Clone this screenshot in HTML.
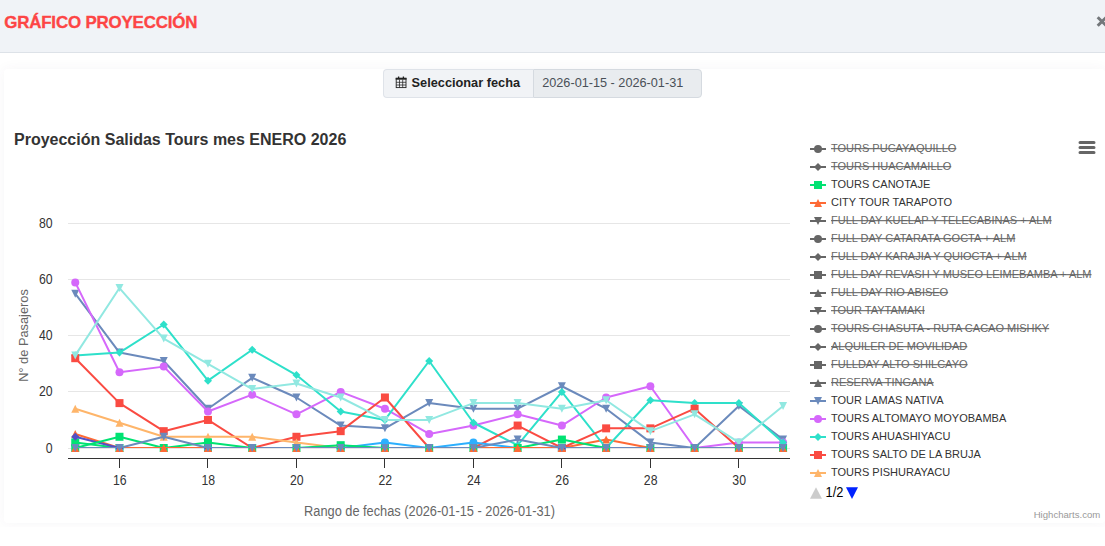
<!DOCTYPE html>
<html lang="es"><head><meta charset="utf-8"><title>Gráfico Proyección</title>
<style>
html,body{margin:0;padding:0}
body{width:1105px;height:546px;overflow:hidden;background:#fff;position:relative;font-family:"Liberation Sans",Arial,sans-serif}
.hdr{position:absolute;left:0;top:0;width:1105px;height:52px;background:#f0f3f7;border-bottom:1px solid #dde2e8}
.hdr h5{position:absolute;left:4.2px;top:12px;margin:0;font-size:16.9px;line-height:22px;font-weight:bold;color:#fd4545;white-space:nowrap;letter-spacing:-0.17px;-webkit-text-stroke:0.35px #fd4545}
.close{position:absolute;left:1096px;top:8px;font-size:22px;line-height:26px;font-weight:bold;color:transparent}
.cx{position:absolute;left:1096px;top:15px}
.wrap{position:absolute;left:0;top:53px;width:1105px;height:474px;overflow:hidden}
.card{position:absolute;left:4px;top:16px;width:1100.5px;height:454px;background:#fff;border-radius:4px;box-shadow:0 0 13px 0 rgba(82,63,105,.05)}
.grp{position:absolute;left:383px;top:69px;width:319px;height:29px;box-sizing:border-box;display:flex}
.grp .lab{width:150px;box-sizing:border-box;border:1px solid #dfe3e9;border-right:0;border-radius:4px 0 0 4px;background:#f1f3f6;font-weight:bold;font-size:12.75px;color:#222;line-height:25.500px;padding-left:27.600px;position:relative;white-space:nowrap}
.grp .inp{flex:1;box-sizing:border-box;border:1px solid #d5dae0;border-radius:0 4px 4px 0;background:#e9ecef;font-size:12.7px;color:#495057;line-height:27.500px;padding-left:8.200px;white-space:nowrap}
.grp svg{position:absolute;left:11px;top:6px}
svg.chart{position:absolute;left:0;top:0}
</style></head><body>
<div class="hdr"><h5>GRÁFICO PROYECCIÓN</h5><span class="close">×</span><svg class="cx" width="12" height="14" viewBox="0 0 12 14"><path d="M1.700 2.200L10.300 10.800M1.700 10.800L10.300 2.200" stroke="#74777b" stroke-width="3" fill="none"/></svg></div>
<div class="wrap"><div class="card"></div></div>
<div class="grp"><div class="lab"><svg width="12" height="13" viewBox="0 0 12 13"><path d="M3.600 0.4v2.200M8.400 0.4v2.200" stroke="#222" stroke-width="1.300" fill="none"/><rect x="0.7" y="1.700" width="10.800" height="2" fill="#222"/><rect x="1.200" y="2.500" width="9.800" height="9.100" stroke="#222" stroke-width="0.9" fill="none"/><path d="M4.500 3.500v8M7.700 3.500v8M1.200 6.300h9.800M1.200 9h9.800" stroke="#222" stroke-width="0.75" fill="none"/></svg>Seleccionar fecha</div><div class="inp">2026-01-15 - 2026-01-31</div></div>
<svg class="chart" width="1105" height="546" viewBox="0 0 1105 546" font-family="'Liberation Sans', Arial, Helvetica, sans-serif">
<defs><clipPath id="pc"><rect x="68" y="223" width="722" height="225"/></clipPath></defs>
<path d="M68 448.5H790" stroke="#e6e6e6" stroke-width="1" fill="none"/>
<path d="M68 391.5H790" stroke="#e6e6e6" stroke-width="1" fill="none"/>
<path d="M68 335.5H790" stroke="#e6e6e6" stroke-width="1" fill="none"/>
<path d="M68 279.5H790" stroke="#e6e6e6" stroke-width="1" fill="none"/>
<path d="M68 223.5H790" stroke="#e6e6e6" stroke-width="1" fill="none"/>
<path d="M68 458.5H790" stroke="#333" stroke-width="1" fill="none"/>
<path d="M119.5 458V468" stroke="#333" stroke-width="1" fill="none"/>
<text transform="translate(119.79 485) scale(0.96 1.12)" text-anchor="middle" font-size="12.8" fill="#333">16</text>
<path d="M207.5 458V468" stroke="#333" stroke-width="1" fill="none"/>
<text transform="translate(208.27 485) scale(0.96 1.12)" text-anchor="middle" font-size="12.8" fill="#333">18</text>
<path d="M296.5 458V468" stroke="#333" stroke-width="1" fill="none"/>
<text transform="translate(296.75 485) scale(0.96 1.12)" text-anchor="middle" font-size="12.8" fill="#333">20</text>
<path d="M384.5 458V468" stroke="#333" stroke-width="1" fill="none"/>
<text transform="translate(385.23 485) scale(0.96 1.12)" text-anchor="middle" font-size="12.8" fill="#333">22</text>
<path d="M473.5 458V468" stroke="#333" stroke-width="1" fill="none"/>
<text transform="translate(473.71 485) scale(0.96 1.12)" text-anchor="middle" font-size="12.8" fill="#333">24</text>
<path d="M561.5 458V468" stroke="#333" stroke-width="1" fill="none"/>
<text transform="translate(562.19 485) scale(0.96 1.12)" text-anchor="middle" font-size="12.8" fill="#333">26</text>
<path d="M650.5 458V468" stroke="#333" stroke-width="1" fill="none"/>
<text transform="translate(650.67 485) scale(0.96 1.12)" text-anchor="middle" font-size="12.8" fill="#333">28</text>
<path d="M738.5 458V468" stroke="#333" stroke-width="1" fill="none"/>
<text transform="translate(739.15 485) scale(0.96 1.12)" text-anchor="middle" font-size="12.8" fill="#333">30</text>
<text transform="translate(52.6 452.5) scale(0.96 1.12)" text-anchor="end" font-size="12.8" fill="#333">0</text>
<text transform="translate(52.6 396.38) scale(0.96 1.12)" text-anchor="end" font-size="12.8" fill="#333">20</text>
<text transform="translate(52.6 340.25) scale(0.96 1.12)" text-anchor="end" font-size="12.8" fill="#333">40</text>
<text transform="translate(52.6 284.12) scale(0.96 1.12)" text-anchor="end" font-size="12.8" fill="#333">60</text>
<text transform="translate(52.6 228) scale(0.96 1.12)" text-anchor="end" font-size="12.8" fill="#333">80</text>
<text transform="translate(28.3 335.5) rotate(-90) scale(1 1)" text-anchor="middle" font-size="12.8" fill="#666">N° de Pasajeros</text>
<text transform="translate(429.5 515.5) scale(1 1.1)" text-anchor="middle" font-size="12.8" fill="#666">Rango de fechas (2026-01-15 - 2026-01-31)</text>
<text transform="translate(14 144.5) scale(1 1)" font-size="16" fill="#333" font-weight="bold">Proyección Salidas Tours mes ENERO 2026</text>
<g>
<path d="M75.25 442.39L119.49 448L163.73 448L207.97 448L252.21 448L296.45 448L340.69 448L384.93 448L429.17 448L473.41 448L517.65 448L561.89 448L606.13 448L650.37 448L694.61 448L738.85 448L783.09 448" stroke="#00e272" stroke-width="2" fill="none" stroke-linejoin="round" stroke-linecap="round" clip-path="url(#pc)"/>
<rect x="71.25" y="438.39" width="8" height="8" fill="#00e272"/>
<rect x="115.49" y="444" width="8" height="8" fill="#00e272"/>
<rect x="203.97" y="444" width="8" height="8" fill="#00e272"/>
<rect x="336.69" y="444" width="8" height="8" fill="#00e272"/>
<rect x="557.89" y="444" width="8" height="8" fill="#00e272"/>
</g>
<g>
<path d="M75.25 433.97L119.49 448L163.73 448L207.97 448L252.21 448L296.45 448L340.69 448L384.93 448L429.17 448L473.41 448L517.65 448L561.89 448L606.13 439.58L650.37 448L694.61 448L738.85 448L783.09 448" stroke="#fe6a35" stroke-width="2" fill="none" stroke-linejoin="round" stroke-linecap="round" clip-path="url(#pc)"/>
<path d="M75.25 429.97L79.25 437.97L71.25 437.97Z" fill="#fe6a35"/>
<path d="M119.49 444L123.49 452L115.49 452Z" fill="#fe6a35"/>
<path d="M207.97 444L211.97 452L203.97 452Z" fill="#fe6a35"/>
<path d="M340.69 444L344.69 452L336.69 452Z" fill="#fe6a35"/>
<path d="M561.89 444L565.89 452L557.89 452Z" fill="#fe6a35"/>
<path d="M606.13 435.58L610.13 443.58L602.13 443.58Z" fill="#fe6a35"/>
</g>
<g>
<path d="M75.25 293.66L119.49 352.59L163.73 361.01L207.97 408.71L252.21 377.84L296.45 397.49L340.69 425.55L384.93 428.36L429.17 403.1L473.41 408.71L517.65 408.71L561.89 386.26L606.13 408.71L650.37 442.39L694.61 448L738.85 405.91L783.09 439.58" stroke="#6b8abc" stroke-width="2" fill="none" stroke-linejoin="round" stroke-linecap="round" clip-path="url(#pc)"/>
<path d="M71.25 289.66L79.25 289.66L75.25 297.66Z" fill="#6b8abc"/>
<path d="M115.49 348.59L123.49 348.59L119.49 356.59Z" fill="#6b8abc"/>
<path d="M159.73 357.01L167.73 357.01L163.73 365.01Z" fill="#6b8abc"/>
<path d="M203.97 404.71L211.97 404.71L207.97 412.71Z" fill="#6b8abc"/>
<path d="M248.21 373.84L256.21 373.84L252.21 381.84Z" fill="#6b8abc"/>
<path d="M292.45 393.49L300.45 393.49L296.45 401.49Z" fill="#6b8abc"/>
<path d="M336.69 421.55L344.69 421.55L340.69 429.55Z" fill="#6b8abc"/>
<path d="M380.93 424.36L388.93 424.36L384.93 432.36Z" fill="#6b8abc"/>
<path d="M425.17 399.1L433.17 399.1L429.17 407.1Z" fill="#6b8abc"/>
<path d="M469.41 404.71L477.41 404.71L473.41 412.71Z" fill="#6b8abc"/>
<path d="M513.65 404.71L521.65 404.71L517.65 412.71Z" fill="#6b8abc"/>
<path d="M557.89 382.26L565.89 382.26L561.89 390.26Z" fill="#6b8abc"/>
<path d="M602.13 404.71L610.13 404.71L606.13 412.71Z" fill="#6b8abc"/>
<path d="M646.37 438.39L654.37 438.39L650.37 446.39Z" fill="#6b8abc"/>
<path d="M734.85 401.91L742.85 401.91L738.85 409.91Z" fill="#6b8abc"/>
<path d="M779.09 435.58L787.09 435.58L783.09 443.58Z" fill="#6b8abc"/>
</g>
<g>
<path d="M75.25 282.43L119.49 372.23L163.73 366.62L207.97 411.52L252.21 394.68L296.45 414.32L340.69 391.88L384.93 408.71L429.17 433.97L473.41 425.55L517.65 414.32L561.89 425.55L606.13 397.49L650.37 386.26L694.61 448L738.85 442.39L783.09 442.39" stroke="#d568fb" stroke-width="2" fill="none" stroke-linejoin="round" stroke-linecap="round" clip-path="url(#pc)"/>
<circle cx="75.25" cy="282.43" r="4" fill="#d568fb"/>
<circle cx="119.49" cy="372.23" r="4" fill="#d568fb"/>
<circle cx="163.73" cy="366.62" r="4" fill="#d568fb"/>
<circle cx="207.97" cy="411.52" r="4" fill="#d568fb"/>
<circle cx="252.21" cy="394.68" r="4" fill="#d568fb"/>
<circle cx="296.45" cy="414.32" r="4" fill="#d568fb"/>
<circle cx="340.69" cy="391.88" r="4" fill="#d568fb"/>
<circle cx="384.93" cy="408.71" r="4" fill="#d568fb"/>
<circle cx="429.17" cy="433.97" r="4" fill="#d568fb"/>
<circle cx="473.41" cy="425.55" r="4" fill="#d568fb"/>
<circle cx="517.65" cy="414.32" r="4" fill="#d568fb"/>
<circle cx="561.89" cy="425.55" r="4" fill="#d568fb"/>
<circle cx="606.13" cy="397.49" r="4" fill="#d568fb"/>
<circle cx="650.37" cy="386.26" r="4" fill="#d568fb"/>
<circle cx="738.85" cy="442.39" r="4" fill="#d568fb"/>
<circle cx="783.09" cy="442.39" r="4" fill="#d568fb"/>
</g>
<g>
<path d="M75.25 355.39L119.49 352.59L163.73 324.52L207.97 380.65L252.21 349.78L296.45 375.04L340.69 411.52L384.93 419.94L429.17 361.01L473.41 422.74L517.65 445.19L561.89 391.88L606.13 448L650.37 400.29L694.61 403.1L738.85 403.1L783.09 442.39" stroke="#2ee0ca" stroke-width="2" fill="none" stroke-linejoin="round" stroke-linecap="round" clip-path="url(#pc)"/>
<path d="M75.25 351.39L79.25 355.39L75.25 359.39L71.25 355.39Z" fill="#2ee0ca"/>
<path d="M119.49 348.59L123.49 352.59L119.49 356.59L115.49 352.59Z" fill="#2ee0ca"/>
<path d="M163.73 320.52L167.73 324.52L163.73 328.52L159.73 324.52Z" fill="#2ee0ca"/>
<path d="M207.97 376.65L211.97 380.65L207.97 384.65L203.97 380.65Z" fill="#2ee0ca"/>
<path d="M252.21 345.78L256.21 349.78L252.21 353.78L248.21 349.78Z" fill="#2ee0ca"/>
<path d="M296.45 371.04L300.45 375.04L296.45 379.04L292.45 375.04Z" fill="#2ee0ca"/>
<path d="M340.69 407.52L344.69 411.52L340.69 415.52L336.69 411.52Z" fill="#2ee0ca"/>
<path d="M384.93 415.94L388.93 419.94L384.93 423.94L380.93 419.94Z" fill="#2ee0ca"/>
<path d="M429.17 357.01L433.17 361.01L429.17 365.01L425.17 361.01Z" fill="#2ee0ca"/>
<path d="M473.41 418.74L477.41 422.74L473.41 426.74L469.41 422.74Z" fill="#2ee0ca"/>
<path d="M517.65 441.19L521.65 445.19L517.65 449.19L513.65 445.19Z" fill="#2ee0ca"/>
<path d="M561.89 387.88L565.89 391.88L561.89 395.88L557.89 391.88Z" fill="#2ee0ca"/>
<path d="M650.37 396.29L654.37 400.29L650.37 404.29L646.37 400.29Z" fill="#2ee0ca"/>
<path d="M694.61 399.1L698.61 403.1L694.61 407.1L690.61 403.1Z" fill="#2ee0ca"/>
<path d="M738.85 399.1L742.85 403.1L738.85 407.1L734.85 403.1Z" fill="#2ee0ca"/>
<path d="M783.09 438.39L787.09 442.39L783.09 446.39L779.09 442.39Z" fill="#2ee0ca"/>
</g>
<g>
<path d="M75.25 358.2L119.49 403.1L163.73 431.16L207.97 419.94L252.21 448L296.45 436.77L340.69 431.16L384.93 397.49L429.17 448L473.41 448L517.65 425.55L561.89 448L606.13 428.36L650.37 428.36L694.61 408.71L738.85 448L783.09 448" stroke="#fa4b42" stroke-width="2" fill="none" stroke-linejoin="round" stroke-linecap="round" clip-path="url(#pc)"/>
<rect x="71.25" y="354.2" width="8" height="8" fill="#fa4b42"/>
<rect x="115.49" y="399.1" width="8" height="8" fill="#fa4b42"/>
<rect x="159.73" y="427.16" width="8" height="8" fill="#fa4b42"/>
<rect x="203.97" y="415.94" width="8" height="8" fill="#fa4b42"/>
<rect x="292.45" y="432.77" width="8" height="8" fill="#fa4b42"/>
<rect x="336.69" y="427.16" width="8" height="8" fill="#fa4b42"/>
<rect x="380.93" y="393.49" width="8" height="8" fill="#fa4b42"/>
<rect x="513.65" y="421.55" width="8" height="8" fill="#fa4b42"/>
<rect x="557.89" y="444" width="8" height="8" fill="#fa4b42"/>
<rect x="602.13" y="424.36" width="8" height="8" fill="#fa4b42"/>
<rect x="646.37" y="424.36" width="8" height="8" fill="#fa4b42"/>
<rect x="690.61" y="404.71" width="8" height="8" fill="#fa4b42"/>
</g>
<g>
<path d="M75.25 408.71L119.49 422.74L163.73 436.77L207.97 436.77L252.21 436.77L296.45 442.39L340.69 448L384.93 448L429.17 448L473.41 448L517.65 448L561.89 448L606.13 448L650.37 448L694.61 448L738.85 448L783.09 448" stroke="#feb56a" stroke-width="2" fill="none" stroke-linejoin="round" stroke-linecap="round" clip-path="url(#pc)"/>
<path d="M75.25 404.71L79.25 412.71L71.25 412.71Z" fill="#feb56a"/>
<path d="M119.49 418.74L123.49 426.74L115.49 426.74Z" fill="#feb56a"/>
<path d="M163.73 432.77L167.73 440.77L159.73 440.77Z" fill="#feb56a"/>
<path d="M207.97 432.77L211.97 440.77L203.97 440.77Z" fill="#feb56a"/>
<path d="M252.21 432.77L256.21 440.77L248.21 440.77Z" fill="#feb56a"/>
<path d="M296.45 438.39L300.45 446.39L292.45 446.39Z" fill="#feb56a"/>
<path d="M340.69 444L344.69 452L336.69 452Z" fill="#feb56a"/>
<path d="M561.89 444L565.89 452L557.89 452Z" fill="#feb56a"/>
</g>
<g>
<path d="M75.25 355.39L119.49 288.04L163.73 338.56L207.97 363.81L252.21 389.07L296.45 383.46L340.69 397.49L384.93 419.94L429.17 419.94L473.41 403.1L517.65 403.1L561.89 408.71L606.13 400.29L650.37 431.16L694.61 414.32L738.85 442.39L783.09 405.91" stroke="#91e8e1" stroke-width="2" fill="none" stroke-linejoin="round" stroke-linecap="round" clip-path="url(#pc)"/>
<path d="M71.25 351.39L79.25 351.39L75.25 359.39Z" fill="#91e8e1"/>
<path d="M115.49 284.04L123.49 284.04L119.49 292.04Z" fill="#91e8e1"/>
<path d="M159.73 334.56L167.73 334.56L163.73 342.56Z" fill="#91e8e1"/>
<path d="M203.97 359.81L211.97 359.81L207.97 367.81Z" fill="#91e8e1"/>
<path d="M248.21 385.07L256.21 385.07L252.21 393.07Z" fill="#91e8e1"/>
<path d="M292.45 379.46L300.45 379.46L296.45 387.46Z" fill="#91e8e1"/>
<path d="M336.69 393.49L344.69 393.49L340.69 401.49Z" fill="#91e8e1"/>
<path d="M380.93 415.94L388.93 415.94L384.93 423.94Z" fill="#91e8e1"/>
<path d="M425.17 415.94L433.17 415.94L429.17 423.94Z" fill="#91e8e1"/>
<path d="M469.41 399.1L477.41 399.1L473.41 407.1Z" fill="#91e8e1"/>
<path d="M513.65 399.1L521.65 399.1L517.65 407.1Z" fill="#91e8e1"/>
<path d="M557.89 404.71L565.89 404.71L561.89 412.71Z" fill="#91e8e1"/>
<path d="M602.13 396.29L610.13 396.29L606.13 404.29Z" fill="#91e8e1"/>
<path d="M646.37 427.16L654.37 427.16L650.37 435.16Z" fill="#91e8e1"/>
<path d="M690.61 410.32L698.61 410.32L694.61 418.32Z" fill="#91e8e1"/>
<path d="M734.85 438.39L742.85 438.39L738.85 446.39Z" fill="#91e8e1"/>
<path d="M779.09 401.91L787.09 401.91L783.09 409.91Z" fill="#91e8e1"/>
</g>
<g>
<path d="M75.25 448L119.49 448L163.73 448L207.97 448L252.21 448L296.45 448L340.69 448L384.93 442.39L429.17 448L473.41 442.39L517.65 448L561.89 448L606.13 448L650.37 448L694.61 448L738.85 448L783.09 448" stroke="#2caffe" stroke-width="2" fill="none" stroke-linejoin="round" stroke-linecap="round" clip-path="url(#pc)"/>
<circle cx="119.49" cy="448" r="4" fill="#2caffe"/>
<circle cx="207.97" cy="448" r="4" fill="#2caffe"/>
<circle cx="340.69" cy="448" r="4" fill="#2caffe"/>
<circle cx="384.93" cy="442.39" r="4" fill="#2caffe"/>
<circle cx="473.41" cy="442.39" r="4" fill="#2caffe"/>
<circle cx="561.89" cy="448" r="4" fill="#2caffe"/>
</g>
<g>
<path d="M75.25 436.77L119.49 448L163.73 448L207.97 448L252.21 448L296.45 448L340.69 448L384.93 448L429.17 448L473.41 448L517.65 448L561.89 448L606.13 448L650.37 448L694.61 448L738.85 448L783.09 448" stroke="#544fc5" stroke-width="2" fill="none" stroke-linejoin="round" stroke-linecap="round" clip-path="url(#pc)"/>
<path d="M75.25 432.77L79.25 436.77L75.25 440.77L71.25 436.77Z" fill="#544fc5"/>
<path d="M119.49 444L123.49 448L119.49 452L115.49 448Z" fill="#544fc5"/>
<path d="M207.97 444L211.97 448L207.97 452L203.97 448Z" fill="#544fc5"/>
<path d="M340.69 444L344.69 448L340.69 452L336.69 448Z" fill="#544fc5"/>
<path d="M561.89 444L565.89 448L561.89 452L557.89 448Z" fill="#544fc5"/>
</g>
<g>
<path d="M75.25 448L119.49 436.77L163.73 448L207.97 442.39L252.21 448L296.45 448L340.69 445.19L384.93 448L429.17 448L473.41 448L517.65 448L561.89 439.58L606.13 448L650.37 448L694.61 448L738.85 448L783.09 448" stroke="#00e272" stroke-width="2" fill="none" stroke-linejoin="round" stroke-linecap="round" clip-path="url(#pc)"/>
<rect x="71.25" y="444" width="8" height="8" fill="#00e272"/>
<rect x="115.49" y="432.77" width="8" height="8" fill="#00e272"/>
<rect x="159.73" y="444" width="8" height="8" fill="#00e272"/>
<rect x="203.97" y="438.39" width="8" height="8" fill="#00e272"/>
<rect x="248.21" y="444" width="8" height="8" fill="#00e272"/>
<rect x="292.45" y="444" width="8" height="8" fill="#00e272"/>
<rect x="336.69" y="441.19" width="8" height="8" fill="#00e272"/>
<rect x="380.93" y="444" width="8" height="8" fill="#00e272"/>
<rect x="425.17" y="444" width="8" height="8" fill="#00e272"/>
<rect x="469.41" y="444" width="8" height="8" fill="#00e272"/>
<rect x="513.65" y="444" width="8" height="8" fill="#00e272"/>
<rect x="557.89" y="435.58" width="8" height="8" fill="#00e272"/>
<rect x="602.13" y="444" width="8" height="8" fill="#00e272"/>
<rect x="646.37" y="444" width="8" height="8" fill="#00e272"/>
<rect x="690.61" y="444" width="8" height="8" fill="#00e272"/>
<rect x="734.85" y="444" width="8" height="8" fill="#00e272"/>
<rect x="779.09" y="444" width="8" height="8" fill="#00e272"/>
</g>
<g>
<path d="M75.25 448L119.49 448L163.73 448L207.97 448L252.21 448L296.45 448L340.69 448L384.93 448L429.17 448L473.41 448L517.65 448L561.89 448L606.13 448L650.37 448L694.61 448L738.85 448L783.09 448" stroke="#fe6a35" stroke-width="2" fill="none" stroke-linejoin="round" stroke-linecap="round" clip-path="url(#pc)"/>
<path d="M75.25 444L79.25 452L71.25 452Z" fill="#fe6a35"/>
<path d="M119.49 444L123.49 452L115.49 452Z" fill="#fe6a35"/>
<path d="M163.73 444L167.73 452L159.73 452Z" fill="#fe6a35"/>
<path d="M207.97 444L211.97 452L203.97 452Z" fill="#fe6a35"/>
<path d="M252.21 444L256.21 452L248.21 452Z" fill="#fe6a35"/>
<path d="M296.45 444L300.45 452L292.45 452Z" fill="#fe6a35"/>
<path d="M340.69 444L344.69 452L336.69 452Z" fill="#fe6a35"/>
<path d="M384.93 444L388.93 452L380.93 452Z" fill="#fe6a35"/>
<path d="M429.17 444L433.17 452L425.17 452Z" fill="#fe6a35"/>
<path d="M473.41 444L477.41 452L469.41 452Z" fill="#fe6a35"/>
<path d="M517.65 444L521.65 452L513.65 452Z" fill="#fe6a35"/>
<path d="M561.89 444L565.89 452L557.89 452Z" fill="#fe6a35"/>
<path d="M606.13 444L610.13 452L602.13 452Z" fill="#fe6a35"/>
<path d="M650.37 444L654.37 452L646.37 452Z" fill="#fe6a35"/>
<path d="M694.61 444L698.61 452L690.61 452Z" fill="#fe6a35"/>
<path d="M738.85 444L742.85 452L734.85 452Z" fill="#fe6a35"/>
<path d="M783.09 444L787.09 452L779.09 452Z" fill="#fe6a35"/>
</g>
<g>
<path d="M75.25 448L119.49 448L163.73 436.77L207.97 448L252.21 448L296.45 448L340.69 448L384.93 448L429.17 448L473.41 448L517.65 439.58L561.89 448L606.13 448L650.37 448L694.61 448L738.85 448L783.09 448" stroke="#6b8abc" stroke-width="2" fill="none" stroke-linejoin="round" stroke-linecap="round" clip-path="url(#pc)"/>
<path d="M71.25 444L79.25 444L75.25 452Z" fill="#6b8abc"/>
<path d="M115.49 444L123.49 444L119.49 452Z" fill="#6b8abc"/>
<path d="M159.73 432.77L167.73 432.77L163.73 440.77Z" fill="#6b8abc"/>
<path d="M203.97 444L211.97 444L207.97 452Z" fill="#6b8abc"/>
<path d="M248.21 444L256.21 444L252.21 452Z" fill="#6b8abc"/>
<path d="M292.45 444L300.45 444L296.45 452Z" fill="#6b8abc"/>
<path d="M336.69 444L344.69 444L340.69 452Z" fill="#6b8abc"/>
<path d="M380.93 444L388.93 444L384.93 452Z" fill="#6b8abc"/>
<path d="M425.17 444L433.17 444L429.17 452Z" fill="#6b8abc"/>
<path d="M469.41 444L477.41 444L473.41 452Z" fill="#6b8abc"/>
<path d="M513.65 435.58L521.65 435.58L517.65 443.58Z" fill="#6b8abc"/>
<path d="M557.89 444L565.89 444L561.89 452Z" fill="#6b8abc"/>
<path d="M602.13 444L610.13 444L606.13 452Z" fill="#6b8abc"/>
<path d="M646.37 444L654.37 444L650.37 452Z" fill="#6b8abc"/>
<path d="M690.61 444L698.61 444L694.61 452Z" fill="#6b8abc"/>
<path d="M734.85 444L742.85 444L738.85 452Z" fill="#6b8abc"/>
<path d="M779.09 444L787.09 444L783.09 452Z" fill="#6b8abc"/>
</g>
<path d="M810 149H826" stroke="#666" stroke-width="2" fill="none"/>
<circle cx="818" cy="149" r="4" fill="#666"/>
<text transform="translate(831 152) scale(1 1)" font-size="11" fill="#666" text-decoration="line-through">TOURS PUCAYAQUILLO</text>
<path d="M810 167H826" stroke="#666" stroke-width="2" fill="none"/>
<path d="M818 163L822 167L818 171L814 167Z" fill="#666"/>
<text transform="translate(831 170) scale(1 1)" font-size="11" fill="#666" text-decoration="line-through">TOURS HUACAMAILLO</text>
<path d="M810 185H826" stroke="#00e272" stroke-width="2" fill="none"/>
<rect x="814" y="181" width="8" height="8" fill="#00e272"/>
<text transform="translate(831 188) scale(1 1)" font-size="11" fill="#333">TOURS CANOTAJE</text>
<path d="M810 203H826" stroke="#fe6a35" stroke-width="2" fill="none"/>
<path d="M818 199L822 207L814 207Z" fill="#fe6a35"/>
<text transform="translate(831 206) scale(1 1)" font-size="11" fill="#333">CITY TOUR TARAPOTO</text>
<path d="M810 221H826" stroke="#666" stroke-width="2" fill="none"/>
<path d="M814 217L822 217L818 225Z" fill="#666"/>
<text transform="translate(831 224) scale(1 1)" font-size="11" fill="#666" text-decoration="line-through">FULL DAY KUELAP Y TELECABINAS + ALM</text>
<path d="M810 239H826" stroke="#666" stroke-width="2" fill="none"/>
<circle cx="818" cy="239" r="4" fill="#666"/>
<text transform="translate(831 242) scale(1 1)" font-size="11" fill="#666" text-decoration="line-through">FULL DAY CATARATA GOCTA + ALM</text>
<path d="M810 257H826" stroke="#666" stroke-width="2" fill="none"/>
<path d="M818 253L822 257L818 261L814 257Z" fill="#666"/>
<text transform="translate(831 260) scale(1 1)" font-size="11" fill="#666" text-decoration="line-through">FULL DAY KARAJIA Y QUIOCTA + ALM</text>
<path d="M810 275H826" stroke="#666" stroke-width="2" fill="none"/>
<rect x="814" y="271" width="8" height="8" fill="#666"/>
<text transform="translate(831 278) scale(1 1)" font-size="11" fill="#666" text-decoration="line-through">FULL DAY REVASH Y MUSEO LEIMEBAMBA + ALM</text>
<path d="M810 293H826" stroke="#666" stroke-width="2" fill="none"/>
<path d="M818 289L822 297L814 297Z" fill="#666"/>
<text transform="translate(831 296) scale(1 1)" font-size="11" fill="#666" text-decoration="line-through">FULL DAY RIO ABISEO</text>
<path d="M810 311H826" stroke="#666" stroke-width="2" fill="none"/>
<path d="M814 307L822 307L818 315Z" fill="#666"/>
<text transform="translate(831 314) scale(1 1)" font-size="11" fill="#666" text-decoration="line-through">TOUR TAYTAMAKI</text>
<path d="M810 329H826" stroke="#666" stroke-width="2" fill="none"/>
<circle cx="818" cy="329" r="4" fill="#666"/>
<text transform="translate(831 332) scale(1 1)" font-size="11" fill="#666" text-decoration="line-through">TOURS CHASUTA - RUTA CACAO MISHKY</text>
<path d="M810 347H826" stroke="#666" stroke-width="2" fill="none"/>
<path d="M818 343L822 347L818 351L814 347Z" fill="#666"/>
<text transform="translate(831 350) scale(1 1)" font-size="11" fill="#666" text-decoration="line-through">ALQUILER DE MOVILIDAD</text>
<path d="M810 365H826" stroke="#666" stroke-width="2" fill="none"/>
<rect x="814" y="361" width="8" height="8" fill="#666"/>
<text transform="translate(831 368) scale(1 1)" font-size="11" fill="#666" text-decoration="line-through">FULLDAY ALTO SHILCAYO</text>
<path d="M810 383H826" stroke="#666" stroke-width="2" fill="none"/>
<path d="M818 379L822 387L814 387Z" fill="#666"/>
<text transform="translate(831 386) scale(1 1)" font-size="11" fill="#666" text-decoration="line-through">RESERVA TINGANA</text>
<path d="M810 401H826" stroke="#6b8abc" stroke-width="2" fill="none"/>
<path d="M814 397L822 397L818 405Z" fill="#6b8abc"/>
<text transform="translate(831 404) scale(1 1)" font-size="11" fill="#333">TOUR LAMAS NATIVA</text>
<path d="M810 419H826" stroke="#d568fb" stroke-width="2" fill="none"/>
<circle cx="818" cy="419" r="4" fill="#d568fb"/>
<text transform="translate(831 422) scale(1 1)" font-size="11" fill="#333">TOURS ALTOMAYO MOYOBAMBA</text>
<path d="M810 437H826" stroke="#2ee0ca" stroke-width="2" fill="none"/>
<path d="M818 433L822 437L818 441L814 437Z" fill="#2ee0ca"/>
<text transform="translate(831 440) scale(1 1)" font-size="11" fill="#333">TOURS AHUASHIYACU</text>
<path d="M810 455H826" stroke="#fa4b42" stroke-width="2" fill="none"/>
<rect x="814" y="451" width="8" height="8" fill="#fa4b42"/>
<text transform="translate(831 458) scale(1 1)" font-size="11" fill="#333">TOURS SALTO DE LA BRUJA</text>
<path d="M810 473H826" stroke="#feb56a" stroke-width="2" fill="none"/>
<path d="M818 469L822 477L814 477Z" fill="#feb56a"/>
<text transform="translate(831 476) scale(1 1)" font-size="11" fill="#333">TOURS PISHURAYACU</text>
<path d="M816 487.3L822 498.700L810 498.700Z" fill="#ccc"/>
<text transform="translate(825.6 497) scale(1 1.1)" font-size="12.8" fill="#000">1/2</text>
<path d="M846 487.2L858 487.2L852 499Z" fill="#0022ff"/>
<path d="M1080 142.5H1094M1080 147.5H1094M1080 152.5H1094" stroke="#666" stroke-width="3" stroke-linecap="round" fill="none"/>
<text transform="translate(1100.3 517.8) scale(1 1.04)" text-anchor="end" font-size="9.6" fill="#999">Highcharts.com</text>
</svg>
</body></html>
